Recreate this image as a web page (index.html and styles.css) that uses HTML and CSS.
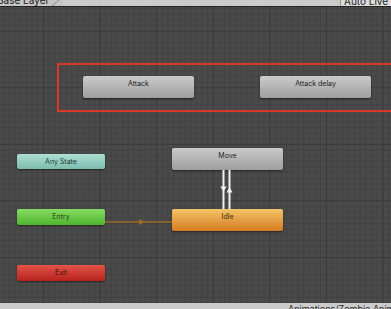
FILE: index.html
```html
<!DOCTYPE html>
<html lang="en">
<head>
<meta charset="UTF-8">
<meta name="viewport" content="width=device-width, initial-scale=1.0">
<title>Animator</title>
<link rel="stylesheet" href="styles.css">
</head>
<body>
<div class="window">
  <div class="toolbar">
    <div class="crumb">
      <span class="crumb-text">Base Layer</span>
      <svg class="crumb-arrow" width="12" height="6" viewBox="0 0 12 6">
        <line x1="10" y1="0" x2="3" y2="6" stroke="#8a8a8a" stroke-width="1"/>
      </svg>
    </div>
    <div class="live-link">Auto Live Link</div>
  </div>

  <div class="graph">
    <div class="selection"></div>

    <div class="node node-gray" style="left:83px; top:69px;">Attack</div>
    <div class="node node-gray" style="left:260px; top:69px;">Attack delay</div>
    <div class="node node-gray" style="left:172px; top:141px;">Move</div>
    <div class="node node-orange" style="left:172px; top:202px;">Idle</div>

    <div class="node node-small node-any" style="left:17px; top:147px;">Any State</div>
    <div class="node node-small node-entry" style="left:17px; top:202px;">Entry</div>
    <div class="node node-small node-exit" style="left:17px; top:258px;">Exit</div>

    <svg class="links" width="391" height="296" viewBox="0 0 391 296">
      <!-- entry -> idle -->
      <line x1="105" y1="215" x2="172" y2="215" stroke="#9a6a26" stroke-width="1.5"/>
      <polygon points="139,212 145,215 139,218" fill="#9a6a26"/>
      <!-- move <-> idle -->
      <line x1="223.5" y1="163" x2="223.5" y2="202" stroke="#f2f2f2" stroke-width="2"/>
      <line x1="229.5" y1="163" x2="229.5" y2="202" stroke="#f2f2f2" stroke-width="2"/>
      <polygon points="220.5,179.5 226.5,179.5 223.5,185" fill="#f2f2f2"/>
      <polygon points="226.5,185.5 232.5,185.5 229.5,180" fill="#f2f2f2"/>
    </svg>
  </div>

  <div class="statusbar">
    <span class="path">Animations/Zombie Animator.controller</span>
  </div>
</div>
</body>
</html>
```

FILE: styles.css
```css
body, html {
  margin: 0;
  height: 100%;
  font-family: Inter, "Noto Sans", sans-serif;
}

.window {
  width: 391px;
  height: 309px;
  display: flex;
  flex-direction: column;
  overflow: hidden;
  background: #474747;
}

.toolbar {
  height: 6px;
  flex: none;
  display: flex;
  justify-content: space-between;
  background: #cbcbcb;
  border-bottom: 1px solid #232323;
  overflow: hidden;
}

.crumb {
  display: flex;
  align-items: flex-start;
  background: #c4c4c4;
  padding-right: 2px;
}

.crumb-text {
  font-size: 10px;
  line-height: 10px;
  color: #1c1c1c;
  margin-top: -5px;
  margin-left: -3px;
}

.crumb-arrow {
  display: block;
}

.live-link {
  font-size: 10px;
  line-height: 10px;
  color: #1c1c1c;
  margin-top: -4px;
  padding-left: 3px;
  width: 47px;
  white-space: nowrap;
  background: #dcdcdc;
  border-left: 1px solid #9a9a9a;
}

.graph {
  flex: 1;
  position: relative;
  background-color: #4a4a4a;
  background-image:
    linear-gradient(to right, #3a3a3a 1px, transparent 1px),
    linear-gradient(to bottom, #3a3a3a 1px, transparent 1px),
    linear-gradient(to right, #424242 1px, transparent 1px),
    linear-gradient(to bottom, #424242 1px, transparent 1px);
  background-size: 56.6px 56.6px, 56.6px 56.6px, 5.66px 5.66px, 5.66px 5.66px;
  background-position: 43px 23.7px, 43px 23.7px, 43px 23.7px, 43px 23.7px;
}

.selection {
  position: absolute;
  left: 57px;
  top: 56px;
  width: 350px;
  height: 45px;
  border: 2px solid #d8382a;
}

.node {
  position: absolute;
  width: 111px;
  height: 22px;
  box-sizing: border-box;
  border-radius: 2px;
  box-shadow: 0 1px 2px rgba(0, 0, 0, 0.5);
  font-size: 7px;
  line-height: 8px;
  padding-top: 4px;
  text-align: center;
  color: #232323;
}

.node-small {
  width: 88px;
  height: 16px;
  padding-top: 4px;
}

.node-gray {
  background: linear-gradient(to bottom, #cbcbcb, #9e9e9e);
}

.node-orange {
  background: linear-gradient(to bottom, #f3c567, #d67a22);
  color: #3a2a12;
}

.node-any {
  height: 15px;
  background: linear-gradient(to bottom, #addfd3, #7dbcad);
  color: #1f3a34;
}

.node-entry {
  background: linear-gradient(to bottom, #86dc63, #4fb52e);
  color: #1c3a10;
}

.node-exit {
  background: linear-gradient(to bottom, #e4544a, #b5231c);
  color: #3a0a08;
}

.links {
  position: absolute;
  left: 0;
  top: 0;
}

.statusbar {
  height: 6px;
  flex: none;
  background: #cbcbcb;
  overflow: hidden;
  padding-left: 288px;
}

.path {
  display: block;
  font-size: 9px;
  line-height: 10px;
  margin-top: 1px;
  color: #2a2a2a;
  white-space: nowrap;
}
```
